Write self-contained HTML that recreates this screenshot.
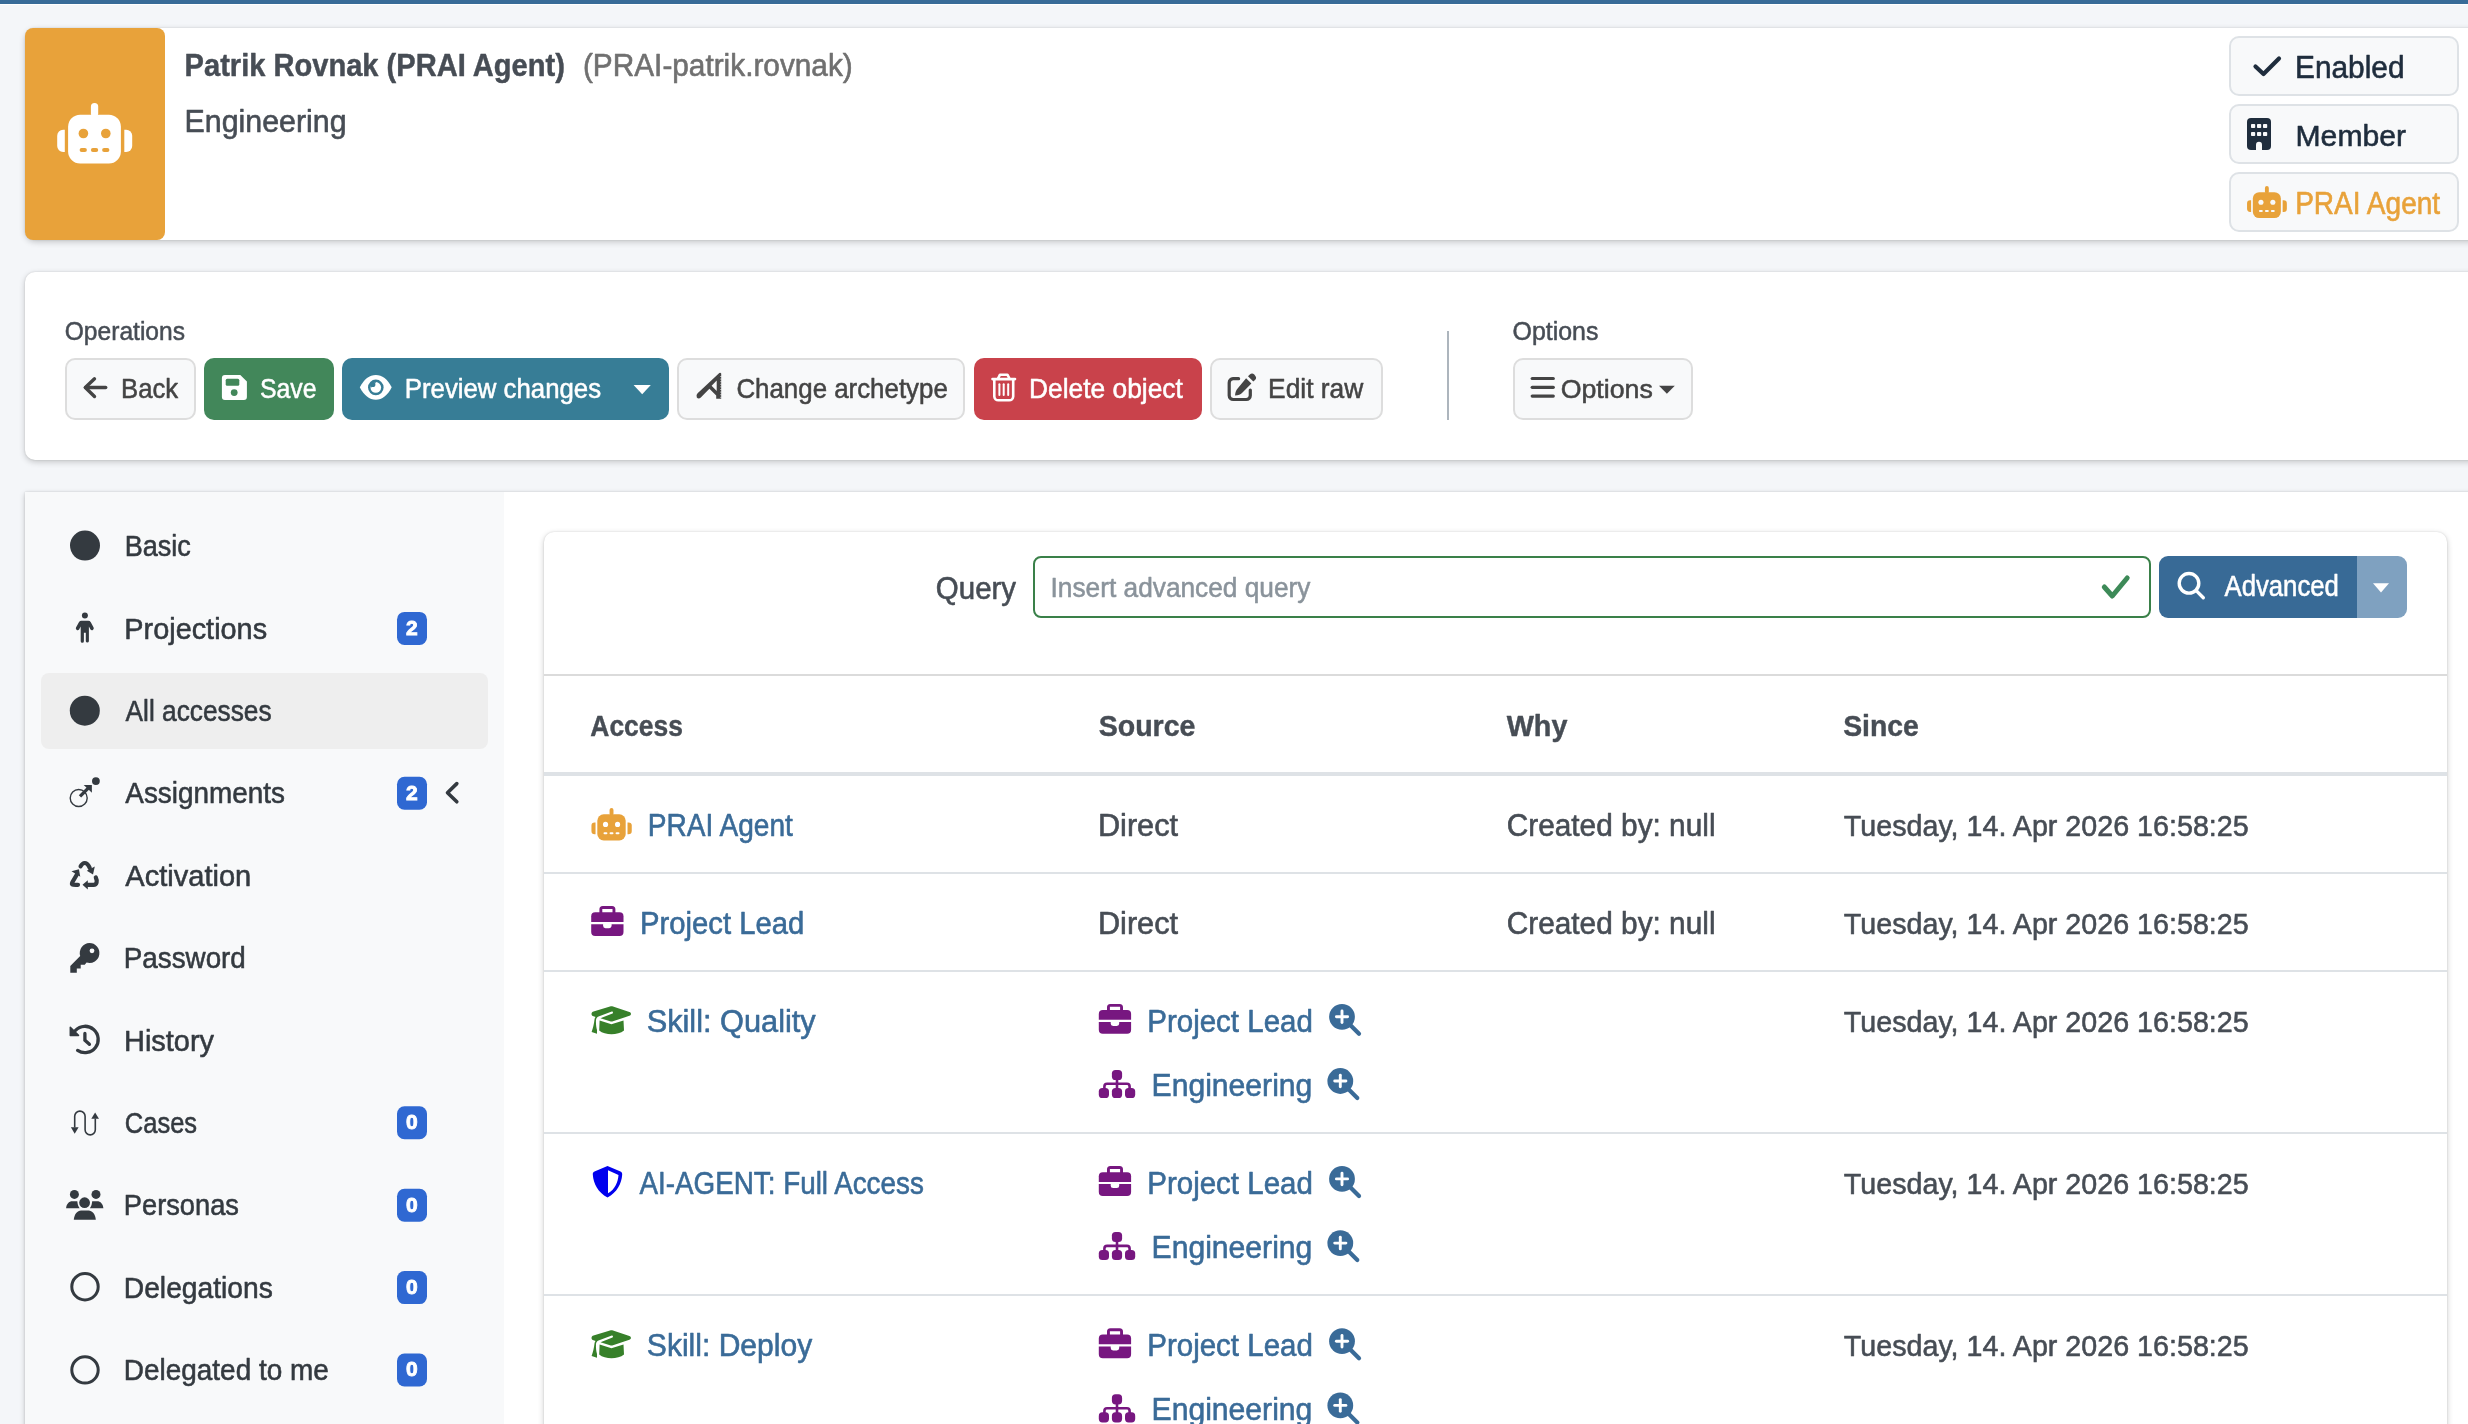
<!DOCTYPE html>
<html lang="en">
<head>
<meta charset="utf-8">
<title>Patrik Rovnak (PRAI Agent) - All accesses</title>
<style>
  html, body { margin:0; padding:0; }
  body { width:2468px; height:1424px; overflow:hidden; background:#f4f6f9; position:relative; font-family:"Liberation Sans", sans-serif; }
  .abs { position:absolute; box-sizing:border-box; }
  .card { background:#ffffff; border-radius:10px; box-shadow:0 0 2px rgba(0,0,0,.125), 0 2px 6px rgba(0,0,0,.2); }
  .btn { border-radius:10px; }
  .btn-def { background:#f8f9fa; border:2px solid #dddddd; }
  .tag { background:#f8f9fa; border:2px solid #dee2e6; border-radius:10px; }
  svg.overlay { position:absolute; left:0; top:0; will-change:transform; }
  svg text { font-family:"Liberation Sans", sans-serif; }
</style>
</head>
<body>
<div class="abs" style="left:0;top:0;width:2468px;height:4px;background:#386b98"></div>
<div class="abs" style="left:0;top:4px;width:2468px;height:1px;background:#ffffff"></div>

<!-- header card -->
<div class="abs card" style="left:25px;top:28px;width:2520px;height:212px;"></div>
<div class="abs" style="left:25px;top:28px;width:140px;height:212px;background:#e8a23a;border-radius:8px"></div>
<div class="abs tag" style="left:2229px;top:36px;width:230px;height:60px"></div>
<div class="abs tag" style="left:2229px;top:104px;width:230px;height:60px"></div>
<div class="abs tag" style="left:2229px;top:172px;width:230px;height:60px"></div>

<!-- operations card -->
<div class="abs card" style="left:25px;top:272px;width:2520px;height:188px;"></div>
<div class="abs btn btn-def" style="left:65px;top:358px;width:131px;height:62px"></div>
<div class="abs btn" style="left:204px;top:358px;width:130px;height:62px;background:#42875a"></div>
<div class="abs btn" style="left:342px;top:358px;width:327px;height:62px;background:#377d96"></div>
<div class="abs btn btn-def" style="left:677px;top:358px;width:288px;height:62px"></div>
<div class="abs btn" style="left:974px;top:358px;width:228px;height:62px;background:#c9424b"></div>
<div class="abs btn btn-def" style="left:1210px;top:358px;width:173px;height:62px"></div>
<div class="abs btn btn-def" style="left:1513px;top:358px;width:180px;height:62px"></div>

<!-- main card -->
<div class="abs card" style="left:25px;top:492px;width:2520px;height:1100px;border-radius:0"></div>
<div class="abs" style="left:25px;top:492px;width:479px;height:1000px;background:#f8f9fa"></div>
<div class="abs" style="left:41px;top:673px;width:447px;height:76px;background:#eeeeee;border-radius:8px"></div>

<!-- inner card -->
<div class="abs card" style="left:544px;top:532px;width:1903px;height:1000px;"></div>
<div class="abs" style="left:1033px;top:556px;width:1118px;height:62px;border:2px solid #3a8049;border-radius:8px;background:#fff"></div>
<div class="abs" style="left:2159px;top:556px;width:198px;height:62px;background:#386a96;border-radius:9px 0 0 9px"></div>
<div class="abs" style="left:2357px;top:556px;width:50px;height:62px;background:#7fa1c0;border-radius:0 9px 9px 0"></div>
<div class="abs" style="left:544px;top:674px;width:1903px;height:2px;background:#dbdbdb"></div>
<div class="abs" style="left:544px;top:772px;width:1903px;height:4px;background:#dee2e6"></div>
<div class="abs" style="left:544px;top:872px;width:1903px;height:2px;background:#dee2e6"></div>
<div class="abs" style="left:544px;top:970px;width:1903px;height:2px;background:#dee2e6"></div>
<div class="abs" style="left:544px;top:1132px;width:1903px;height:2px;background:#dee2e6"></div>
<div class="abs" style="left:544px;top:1294px;width:1903px;height:2px;background:#dee2e6"></div>

<svg class="overlay" width="2468" height="1424" viewBox="0 0 2468 1424">
<rect x="90.90" y="103.00" width="7.30" height="14.00" rx="3.65" fill="#ffffff"/><rect x="68.10" y="114.70" width="52.80" height="48.80" rx="12.00" fill="#ffffff"/><path d="M64.80,129.80 L63.10,129.80 A6.00,6.00 0 0 0 57.20,135.80 L57.20,146.00 A6.00,6.00 0 0 0 63.10,152.00 L64.80,152.00 Z" fill="#ffffff"/><path d="M124.30,129.80 L126.20,129.80 A6.00,6.00 0 0 1 132.20,135.80 L132.20,146.00 A6.00,6.00 0 0 1 126.20,152.00 L124.30,152.00 Z" fill="#ffffff"/><circle cx="83.40" cy="133.50" r="4.80" fill="#e8a23a"/><circle cx="105.80" cy="133.50" r="4.80" fill="#e8a23a"/><rect x="79.60" y="148.00" width="7.30" height="4.00" rx="2.00" fill="#e8a23a"/><rect x="90.90" y="148.00" width="7.30" height="4.00" rx="2.00" fill="#e8a23a"/><rect x="102.10" y="148.00" width="7.30" height="4.00" rx="2.00" fill="#e8a23a"/>
<rect x="2264.94" y="186.00" width="3.87" height="7.43" rx="1.94" fill="#e8a23a"/><rect x="2252.84" y="192.21" width="28.02" height="25.90" rx="6.37" fill="#e8a23a"/><path d="M2251.09,200.22 L2250.18,200.22 A3.18,3.18 0 0 0 2247.05,203.41 L2247.05,208.82 A3.18,3.18 0 0 0 2250.18,212.00 L2251.09,212.00 Z" fill="#e8a23a"/><path d="M2282.66,200.22 L2283.67,200.22 A3.18,3.18 0 0 1 2286.85,203.41 L2286.85,208.82 A3.18,3.18 0 0 1 2283.67,212.00 L2282.66,212.00 Z" fill="#e8a23a"/><circle cx="2260.96" cy="202.19" r="2.55" fill="#f8f9fa"/><circle cx="2272.84" cy="202.19" r="2.55" fill="#f8f9fa"/><rect x="2258.94" y="209.88" width="3.87" height="2.12" rx="1.06" fill="#f8f9fa"/><rect x="2264.94" y="209.88" width="3.87" height="2.12" rx="1.06" fill="#f8f9fa"/><rect x="2270.88" y="209.88" width="3.87" height="2.12" rx="1.06" fill="#f8f9fa"/>
<rect x="609.56" y="808.00" width="3.92" height="7.52" rx="1.96" fill="#e8a23a"/><rect x="597.31" y="814.29" width="28.37" height="26.22" rx="6.45" fill="#e8a23a"/><path d="M595.54,822.40 L594.62,822.40 A3.22,3.22 0 0 0 591.45,825.62 L591.45,831.11 A3.22,3.22 0 0 0 594.62,834.33 L595.54,834.33 Z" fill="#e8a23a"/><path d="M627.51,822.40 L628.53,822.40 A3.22,3.22 0 0 1 631.75,825.62 L631.75,831.11 A3.22,3.22 0 0 1 628.53,834.33 L627.51,834.33 Z" fill="#e8a23a"/><circle cx="605.53" cy="824.39" r="2.58" fill="#ffffff"/><circle cx="617.57" cy="824.39" r="2.58" fill="#ffffff"/><rect x="603.49" y="832.18" width="3.92" height="2.15" rx="1.07" fill="#ffffff"/><rect x="609.56" y="832.18" width="3.92" height="2.15" rx="1.07" fill="#ffffff"/><rect x="615.58" y="832.18" width="3.92" height="2.15" rx="1.07" fill="#ffffff"/>
<polyline points="2255.5,66.5 2263.5,74 2279,58.5" fill="none" stroke="#1f2d3d" stroke-width="4.2" stroke-linecap="round" stroke-linejoin="round"/>
<g><rect x="2247" y="118" width="24" height="32" rx="4" fill="#1f2d3d"/><rect x="2251" y="124" width="4.2" height="4" rx="0.8" fill="#f8f9fa"/><rect x="2251" y="132" width="4.2" height="4" rx="0.8" fill="#f8f9fa"/><rect x="2257" y="124" width="4.2" height="4" rx="0.8" fill="#f8f9fa"/><rect x="2257" y="132" width="4.2" height="4" rx="0.8" fill="#f8f9fa"/><rect x="2263" y="124" width="4.2" height="4" rx="0.8" fill="#f8f9fa"/><rect x="2263" y="132" width="4.2" height="4" rx="0.8" fill="#f8f9fa"/><path d="M2256,150 L2256,144.8 A3,3 0 0 1 2262,144.8 L2262,150 Z" fill="#f8f9fa"/></g>
<g fill="none" stroke="#444444" stroke-width="3.4" stroke-linecap="round" stroke-linejoin="round"><line x1="85.5" y1="387.5" x2="105.7" y2="387.5"/><polyline points="94.5,378.8 85.3,387.5 94.5,396.5"/></g>
<path d="M225,374.9 L240.3,374.9 L246.9,381.5 L246.9,396.9 A3,3 0 0 1 243.9,399.9 L224.9,399.9 A3,3 0 0 1 221.9,396.9 L221.9,377.9 A3,3 0 0 1 224.9,374.9 Z" fill="#ffffff"/><rect x="225.7" y="378.8" width="13.6" height="7" rx="1.5" fill="#42875a"/><circle cx="234.2" cy="392.6" r="3.4" fill="#42875a"/>
<path d="M359.8,387.3 C364,379 369.5,374.9 375.8,374.9 C382.1,374.9 387.6,379 391.7,387.3 C387.6,395.6 382.1,399.7 375.8,399.7 C369.5,399.7 364,395.6 359.8,387.3 Z" fill="#ffffff"/><circle cx="375.8" cy="387.4" r="7.8" fill="#377d96"/><circle cx="375.8" cy="387.4" r="5.3" fill="#ffffff"/><path d="M371.5,387.4 A4.3,4.3 0 0 1 375.8,383.1 L375.8,382.1 A5.3,5.3 0 0 0 370.5,387.4 Z" fill="#377d96"/><circle cx="372.8" cy="384.4" r="2.6" fill="#377d96"/>
<polygon points="633.6,385 650.8,385 642.2,394.2" fill="#ffffff"/>
<path d="M697.6,393.2 L719.3,372.9 Q720.6,372.2 721.2,373.6 L721.2,398.7 L716.2,398.7 L716.2,395.6 L709.4,388.8 L700.8,397.6 Q698.6,399.6 696.8,397.6 Q695.4,395.4 697.6,393.2 Z M711.6,385.7 L716.7,380.6 L716.7,391.1 Z" fill="#444444" fill-rule="evenodd"/>
<g stroke="#f8f9fa" stroke-width="0.9"><line x1="720.4" y1="376.5" x2="721.6" y2="376.5"/><line x1="720.4" y1="379.1" x2="721.6" y2="379.1"/><line x1="720.4" y1="381.7" x2="721.6" y2="381.7"/><line x1="720.4" y1="384.3" x2="721.6" y2="384.3"/><line x1="720.4" y1="386.9" x2="721.6" y2="386.9"/><line x1="720.4" y1="389.5" x2="721.6" y2="389.5"/><line x1="720.4" y1="392.1" x2="721.6" y2="392.1"/><line x1="720.4" y1="394.7" x2="721.6" y2="394.7"/><line x1="720.4" y1="397.3" x2="721.6" y2="397.3"/></g>
<g fill="none" stroke="#ffffff" stroke-width="2.6" stroke-linejoin="round"><line x1="992.5" y1="379.1" x2="1015" y2="379.1" stroke-linecap="round"/><path d="M997.8,379 L1000,374.7 L1007.4,374.7 L1009.7,379"/><path d="M994.3,380 L994.3,396.5 A4,4 0 0 0 998.3,400.3 L1009.2,400.3 A4,4 0 0 0 1013.2,396.5 L1013.2,380"/><line x1="999.4" y1="384.3" x2="999.4" y2="395" stroke-width="2" stroke-linecap="round"/><line x1="1003.7" y1="384.3" x2="1003.7" y2="395" stroke-width="2" stroke-linecap="round"/><line x1="1008.2" y1="384.3" x2="1008.2" y2="395" stroke-width="2" stroke-linecap="round"/></g>
<g><path d="M1238.6,378.7 L1233,378.7 A4,4 0 0 0 1229.2,382.7 L1229.2,395.5 A4,4 0 0 0 1233.2,399.5 L1246.3,399.5 A4,4 0 0 0 1250.3,395.5 L1250.3,390.1" fill="none" stroke="#444444" stroke-width="3.2" stroke-linecap="round"/><path d="M1246.1,378.2 L1251.4,383.5 L1242,393 C1240.5,394.4 1238.5,395.2 1235,395.6 C1235.4,392 1236.2,390 1237.6,388.6 Z" fill="#444444"/><path d="M1248,376.3 L1249.8,374.6 A3.2,3.2 0 0 1 1254.3,374.6 L1255,375.4 A3.2,3.2 0 0 1 1255,379.9 L1253.3,381.6 Z" fill="#444444"/></g>
<rect x="1447" y="331" width="2" height="89" fill="#adb5bd"/>
<g stroke="#444444" stroke-width="3.2" stroke-linecap="round"><line x1="1532.2" y1="378.5" x2="1553.3" y2="378.5"/><line x1="1532.2" y1="387.3" x2="1553.3" y2="387.3"/><line x1="1532.2" y1="396.1" x2="1553.3" y2="396.1"/></g>
<polygon points="1659,385.7 1674.8,385.7 1666.9,393.8" fill="#444444"/>
<circle cx="85" cy="545.6" r="15" fill="#343a40"/>
<circle cx="84.8" cy="710.7" r="15" fill="#343a40"/>
<g fill="#343a40"><circle cx="84.9" cy="615.4" r="3"/><path d="M81.5,620.8 L88.3,620.8 A3,3 0 0 1 90.8,622.2 L93.6,627.6 A1.8,1.8 0 0 1 90.5,629.4 L88.9,626.4 L88.9,641.2 A1.6,1.6 0 0 1 85.8,641.2 L85.8,632.8 L83.9,632.8 L83.9,641.2 A1.6,1.6 0 0 1 80.7,641.2 L80.7,626.4 L79.1,629.4 A1.8,1.8 0 0 1 76,627.6 L78.9,622.2 A3,3 0 0 1 81.5,620.8 Z"/></g>
<g><circle cx="78.7" cy="798" r="8.5" fill="none" stroke="#343a40" stroke-width="1.4"/><line x1="80" y1="796.3" x2="88.5" y2="787.8" stroke="#343a40" stroke-width="3.3"/><polygon points="83.7,784.9 91.9,784.9 91.9,792.8" fill="#343a40"/><circle cx="95.9" cy="781.1" r="3.9" fill="#343a40"/></g>
<g fill="none" stroke="#343a40" stroke-width="4.2" stroke-linecap="round"><path d="M80.6,866.3 C83,862 86.5,862 88.6,865.8 L89.8,868"/><path d="M76.9,874.5 L72.5,882 C71,885 72.5,884.8 76.5,884.8 L78,884.8"/><path d="M86.5,884.8 L93.5,884.8 C97,884.8 97.5,881 95.8,877.5"/></g><g fill="#343a40"><polygon points="86.8,870.8 94.8,866.4 93,874.4"/><polygon points="71.5,871.3 78.9,869.2 80.3,876.7"/><polygon points="82.5,884.8 87.8,880.2 87.8,889.4"/></g>
<g fill="#343a40"><path d="M89.4,943 A10,10 0 1 1 86.6,962.6 L84.7,964.8 L80.7,964.8 L80.7,968.5 L76.8,968.5 L76.8,972.7 L70.3,972.7 L70.3,965.9 L80.2,956 A10,10 0 0 1 89.4,943 Z"/></g><circle cx="92" cy="950.8" r="2.4" fill="#f8f9fa"/>
<g fill="none" stroke="#343a40" stroke-width="3.3" stroke-linecap="round"><path d="M75.5,1030.3 A13.2,13.2 0 1 1 77.6,1050.4"/><polyline points="84.9,1033.5 84.9,1040.2 89.4,1044.3"/></g><polygon points="70.3,1027.3 70.3,1035.4 78.5,1035.4" fill="#343a40" stroke="#343a40" stroke-width="1.5" stroke-linejoin="round"/>
<g fill="none" stroke="#343a40" stroke-width="1.6"><path d="M74.7,1127.5 L74.7,1116.3 A5.2,5.2 0 0 1 85.1,1116.3 L85.1,1129.8 A5.1,5.1 0 0 0 95.3,1129.8 L95.3,1118.6"/></g><g fill="#343a40"><polygon points="70.9,1127.2 78.6,1127.2 74.7,1133.8"/><polygon points="91.3,1118.8 99,1118.8 95.1,1112.5"/></g>
<g fill="#343a40"><circle cx="74.4" cy="1194.4" r="4.5"/><circle cx="96" cy="1194.4" r="4.5"/><circle cx="84.6" cy="1202.7" r="5.4"/><path d="M66.1,1208.3 C66.5,1204 68.8,1201.3 72.5,1201.3 L77.3,1201.3 C77.6,1203.8 78,1206.2 79.6,1208.3 Z"/><path d="M103.4,1208.3 C103,1204 100.7,1201.3 97,1201.3 L92.2,1201.3 C91.9,1203.8 91.5,1206.2 89.9,1208.3 Z"/><path d="M73.8,1219.7 C74.2,1214 77.5,1210.4 81,1210.4 L88.6,1210.4 C92.1,1210.4 95.4,1214 95.8,1219.7 Z"/></g>
<circle cx="85" cy="1286.7" r="13.2" fill="none" stroke="#343a40" stroke-width="3"/>
<circle cx="85" cy="1369.9" r="13.2" fill="none" stroke="#343a40" stroke-width="3"/>
<polyline points="456.8,783.6 447.5,792.7 456.8,801.8" fill="none" stroke="#343a40" stroke-width="3.6" stroke-linecap="round" stroke-linejoin="round"/>
<rect x="397" y="611.90" width="30" height="33" rx="7.5" fill="#2f68d2"/>
<text x="411.8" y="634.80" font-size="21" font-weight="700" fill="#ffffff" stroke="#ffffff" stroke-width="0.9" text-anchor="middle">2</text>
<rect x="397" y="776.70" width="30" height="33" rx="7.5" fill="#2f68d2"/>
<text x="411.8" y="799.60" font-size="21" font-weight="700" fill="#ffffff" stroke="#ffffff" stroke-width="0.9" text-anchor="middle">2</text>
<rect x="397" y="1106.30" width="30" height="33" rx="7.5" fill="#2f68d2"/>
<text x="411.8" y="1129.20" font-size="21" font-weight="700" fill="#ffffff" stroke="#ffffff" stroke-width="0.9" text-anchor="middle">0</text>
<rect x="397" y="1188.70" width="30" height="33" rx="7.5" fill="#2f68d2"/>
<text x="411.8" y="1211.60" font-size="21" font-weight="700" fill="#ffffff" stroke="#ffffff" stroke-width="0.9" text-anchor="middle">0</text>
<rect x="397" y="1271.10" width="30" height="33" rx="7.5" fill="#2f68d2"/>
<text x="411.8" y="1294.00" font-size="21" font-weight="700" fill="#ffffff" stroke="#ffffff" stroke-width="0.9" text-anchor="middle">0</text>
<rect x="397" y="1353.50" width="30" height="33" rx="7.5" fill="#2f68d2"/>
<text x="411.8" y="1376.40" font-size="21" font-weight="700" fill="#ffffff" stroke="#ffffff" stroke-width="0.9" text-anchor="middle">0</text>
<polyline points="2104.3,587 2112.3,596 2127.2,578" fill="none" stroke="#3d8a58" stroke-width="5" stroke-linecap="round" stroke-linejoin="round"/>
<g fill="none" stroke="#ffffff" stroke-width="3.4" stroke-linecap="round"><circle cx="2189" cy="583.3" r="9.8"/><line x1="2196.2" y1="590.6" x2="2203.3" y2="597.7"/></g>
<polygon points="2373,583.3 2389,583.3 2381,592.5" fill="#ffffff"/>
<g fill="#771780"><path d="M599.4000000000001,913 L599.4000000000001,909.6 A3.4,3.4 0 0 1 602.8000000000001,906.1 L612.0,906.1 A3.4,3.4 0 0 1 615.4000000000001,909.6 L615.4000000000001,913 L612.5,913 L612.5,909 L602.3000000000001,909 L602.3000000000001,913 Z"/><path d="M595.2,912.3 L619.5,912.3 A4,4 0 0 1 623.5,916.3 L623.5,922 L591.2,922 L591.2,916.3 A4,4 0 0 1 595.2,912.3 Z"/><path d="M591.2,924.2 L603.1,924.2 L603.1,925.8 A2.4,2.4 0 0 0 605.5,928.2 L609.2,928.2 A2.4,2.4 0 0 0 611.6,925.8 L611.6,924.2 L623.5,924.2 L623.5,932 A4,4 0 0 1 619.5,936 L595.2,936 A4,4 0 0 1 591.2,932 Z"/></g>
<g fill="#37802a"><path d="M591.50,1013.90 C591.50,1012.50 592.50,1012.00 593.50,1011.60 L610.00,1006.60 C611.00,1006.20 612.00,1006.20 613.00,1006.60 L629.40,1012.00 C631.50,1012.80 631.50,1015.00 629.40,1015.80 L613.00,1021.30 C612.00,1021.70 611.00,1021.70 610.00,1021.30 L600.50,1018.20 L612.50,1013.50 C613.50,1013.00 612.80,1011.20 611.80,1011.60 L598.50,1016.60 C597.00,1017.20 596.20,1018.60 596.00,1020.00 C595.80,1024.00 596.20,1027.00 597.00,1030.00 L597.00,1033.70 L591.60,1032.00 C593.00,1028.00 594.00,1024.00 594.50,1019.50 C594.80,1018.00 595.20,1017.40 595.70,1017.00 L593.50,1016.20 C592.30,1015.80 591.50,1015.00 591.50,1013.90 Z"/><path d="M599.60,1020.40 L611.40,1024.30 L623.50,1020.40 L624.00,1030.50 C621.00,1033.00 616.00,1034.20 611.50,1034.20 C607.00,1034.20 602.00,1033.00 599.20,1030.50 Z"/></g>
<g fill="#0000ee"><path d="M607.50,1166.00 L620.50,1171.60 C621.80,1172.20 622.30,1173.20 622.20,1174.60 C621.60,1184.00 617.00,1192.50 607.50,1197.60 C598.00,1192.50 593.40,1184.00 592.80,1174.60 C592.70,1173.20 593.20,1172.20 594.50,1171.60 Z M608.00,1170.20 L608.00,1193.30 C614.80,1189.50 618.00,1182.50 618.50,1175.00 Z" fill-rule="evenodd"/></g>
<g fill="#37802a"><path d="M591.50,1337.90 C591.50,1336.50 592.50,1336.00 593.50,1335.60 L610.00,1330.60 C611.00,1330.20 612.00,1330.20 613.00,1330.60 L629.40,1336.00 C631.50,1336.80 631.50,1339.00 629.40,1339.80 L613.00,1345.30 C612.00,1345.70 611.00,1345.70 610.00,1345.30 L600.50,1342.20 L612.50,1337.50 C613.50,1337.00 612.80,1335.20 611.80,1335.60 L598.50,1340.60 C597.00,1341.20 596.20,1342.60 596.00,1344.00 C595.80,1348.00 596.20,1351.00 597.00,1354.00 L597.00,1357.70 L591.60,1356.00 C593.00,1352.00 594.00,1348.00 594.50,1343.50 C594.80,1342.00 595.20,1341.40 595.70,1341.00 L593.50,1340.20 C592.30,1339.80 591.50,1339.00 591.50,1337.90 Z"/><path d="M599.60,1344.40 L611.40,1348.30 L623.50,1344.40 L624.00,1354.50 C621.00,1357.00 616.00,1358.20 611.50,1358.20 C607.00,1358.20 602.00,1357.00 599.20,1354.50 Z"/></g>
<g fill="#771780"><path d="M1107.0,1010.8 L1107.0,1007.4 A3.4,3.4 0 0 1 1110.3999999999999,1003.9 L1119.6,1003.9 A3.4,3.4 0 0 1 1123.0,1007.4 L1123.0,1010.8 L1120.1,1010.8 L1120.1,1006.8 L1109.8999999999999,1006.8 L1109.8999999999999,1010.8 Z"/><path d="M1102.8,1010.0999999999999 L1127.1,1010.0999999999999 A4,4 0 0 1 1131.1,1014.0999999999999 L1131.1,1019.8 L1098.8,1019.8 L1098.8,1014.0999999999999 A4,4 0 0 1 1102.8,1010.0999999999999 Z"/><path d="M1098.8,1022.0 L1110.7,1022.0 L1110.7,1023.5999999999999 A2.4,2.4 0 0 0 1113.1,1026.0 L1116.8,1026.0 A2.4,2.4 0 0 0 1119.2,1023.5999999999999 L1119.2,1022.0 L1131.1,1022.0 L1131.1,1029.8 A4,4 0 0 1 1127.1,1033.8 L1102.8,1033.8 A4,4 0 0 1 1098.8,1029.8 Z"/></g>
<g><circle cx="1342.00" cy="1016.80" r="12.9" fill="#3a6b98"/><line x1="1350.0" y1="1024.8" x2="1359.0" y2="1033.8" stroke="#3a6b98" stroke-width="4.2" stroke-linecap="round"/><g stroke="#ffffff" stroke-width="2.9" stroke-linecap="round"><line x1="1336.40" y1="1016.80" x2="1347.60" y2="1016.80"/><line x1="1342.00" y1="1011.00" x2="1342.00" y2="1022.60"/></g></g>
<g fill="#771780"><rect x="1111.8999999999999" y="1069.9" width="10.2" height="10.1" rx="3.6"/><rect x="1115.7" y="1078.9" width="2.6" height="10"/><path d="M1103.1,1089.4 L1103.1,1086.5 A4,4 0 0 1 1107.1,1082.5 L1126.8999999999999,1082.5 A4,4 0 0 1 1130.8999999999999,1086.5 L1130.8999999999999,1089.4 L1128.3,1089.4 L1128.3,1086.5 A1.4,1.4 0 0 0 1126.8999999999999,1085.1000000000001 L1107.1,1085.1000000000001 A1.4,1.4 0 0 0 1105.7,1086.5 L1105.7,1089.4 Z"/><rect x="1098.8" y="1087.9" width="10.2" height="10.1" rx="3.6"/><rect x="1111.8999999999999" y="1087.9" width="10.2" height="10.1" rx="3.6"/><rect x="1125.0" y="1087.9" width="10.2" height="10.1" rx="3.6"/></g>
<g><circle cx="1340.30" cy="1081.00" r="12.9" fill="#3a6b98"/><line x1="1348.3" y1="1089.0" x2="1357.3" y2="1098.0" stroke="#3a6b98" stroke-width="4.2" stroke-linecap="round"/><g stroke="#ffffff" stroke-width="2.9" stroke-linecap="round"><line x1="1334.70" y1="1081.00" x2="1345.90" y2="1081.00"/><line x1="1340.30" y1="1075.20" x2="1340.30" y2="1086.80"/></g></g>
<g fill="#771780"><path d="M1107.0,1172.8999999999999 L1107.0,1169.4999999999998 A3.4,3.4 0 0 1 1110.3999999999999,1165.9999999999998 L1119.6,1165.9999999999998 A3.4,3.4 0 0 1 1123.0,1169.4999999999998 L1123.0,1172.8999999999999 L1120.1,1172.8999999999999 L1120.1,1168.8999999999999 L1109.8999999999999,1168.8999999999999 L1109.8999999999999,1172.8999999999999 Z"/><path d="M1102.8,1172.1999999999998 L1127.1,1172.1999999999998 A4,4 0 0 1 1131.1,1176.1999999999998 L1131.1,1181.8999999999999 L1098.8,1181.8999999999999 L1098.8,1176.1999999999998 A4,4 0 0 1 1102.8,1172.1999999999998 Z"/><path d="M1098.8,1184.1 L1110.7,1184.1 L1110.7,1185.6999999999998 A2.4,2.4 0 0 0 1113.1,1188.1 L1116.8,1188.1 A2.4,2.4 0 0 0 1119.2,1185.6999999999998 L1119.2,1184.1 L1131.1,1184.1 L1131.1,1191.8999999999999 A4,4 0 0 1 1127.1,1195.8999999999999 L1102.8,1195.8999999999999 A4,4 0 0 1 1098.8,1191.8999999999999 Z"/></g>
<g><circle cx="1342.00" cy="1178.90" r="12.9" fill="#3a6b98"/><line x1="1350.0" y1="1186.8999999999999" x2="1359.0" y2="1195.8999999999999" stroke="#3a6b98" stroke-width="4.2" stroke-linecap="round"/><g stroke="#ffffff" stroke-width="2.9" stroke-linecap="round"><line x1="1336.40" y1="1178.90" x2="1347.60" y2="1178.90"/><line x1="1342.00" y1="1173.10" x2="1342.00" y2="1184.70"/></g></g>
<g fill="#771780"><rect x="1111.8999999999999" y="1232.0" width="10.2" height="10.1" rx="3.6"/><rect x="1115.7" y="1241.0" width="2.6" height="10"/><path d="M1103.1,1251.5 L1103.1,1248.6 A4,4 0 0 1 1107.1,1244.6 L1126.8999999999999,1244.6 A4,4 0 0 1 1130.8999999999999,1248.6 L1130.8999999999999,1251.5 L1128.3,1251.5 L1128.3,1248.6 A1.4,1.4 0 0 0 1126.8999999999999,1247.2 L1107.1,1247.2 A1.4,1.4 0 0 0 1105.7,1248.6 L1105.7,1251.5 Z"/><rect x="1098.8" y="1250.0" width="10.2" height="10.1" rx="3.6"/><rect x="1111.8999999999999" y="1250.0" width="10.2" height="10.1" rx="3.6"/><rect x="1125.0" y="1250.0" width="10.2" height="10.1" rx="3.6"/></g>
<g><circle cx="1340.30" cy="1243.10" r="12.9" fill="#3a6b98"/><line x1="1348.3" y1="1251.1" x2="1357.3" y2="1260.1" stroke="#3a6b98" stroke-width="4.2" stroke-linecap="round"/><g stroke="#ffffff" stroke-width="2.9" stroke-linecap="round"><line x1="1334.70" y1="1243.10" x2="1345.90" y2="1243.10"/><line x1="1340.30" y1="1237.30" x2="1340.30" y2="1248.90"/></g></g>
<g fill="#771780"><path d="M1107.0,1335.1999999999998 L1107.0,1331.7999999999997 A3.4,3.4 0 0 1 1110.3999999999999,1328.2999999999997 L1119.6,1328.2999999999997 A3.4,3.4 0 0 1 1123.0,1331.7999999999997 L1123.0,1335.1999999999998 L1120.1,1335.1999999999998 L1120.1,1331.1999999999998 L1109.8999999999999,1331.1999999999998 L1109.8999999999999,1335.1999999999998 Z"/><path d="M1102.8,1334.4999999999998 L1127.1,1334.4999999999998 A4,4 0 0 1 1131.1,1338.4999999999998 L1131.1,1344.1999999999998 L1098.8,1344.1999999999998 L1098.8,1338.4999999999998 A4,4 0 0 1 1102.8,1334.4999999999998 Z"/><path d="M1098.8,1346.3999999999999 L1110.7,1346.3999999999999 L1110.7,1347.9999999999998 A2.4,2.4 0 0 0 1113.1,1350.3999999999999 L1116.8,1350.3999999999999 A2.4,2.4 0 0 0 1119.2,1347.9999999999998 L1119.2,1346.3999999999999 L1131.1,1346.3999999999999 L1131.1,1354.1999999999998 A4,4 0 0 1 1127.1,1358.1999999999998 L1102.8,1358.1999999999998 A4,4 0 0 1 1098.8,1354.1999999999998 Z"/></g>
<g><circle cx="1342.00" cy="1341.20" r="12.9" fill="#3a6b98"/><line x1="1350.0" y1="1349.1999999999998" x2="1359.0" y2="1358.1999999999998" stroke="#3a6b98" stroke-width="4.2" stroke-linecap="round"/><g stroke="#ffffff" stroke-width="2.9" stroke-linecap="round"><line x1="1336.40" y1="1341.20" x2="1347.60" y2="1341.20"/><line x1="1342.00" y1="1335.40" x2="1342.00" y2="1347.00"/></g></g>
<g fill="#771780"><rect x="1111.8999999999999" y="1394.3" width="10.2" height="10.1" rx="3.6"/><rect x="1115.7" y="1403.3" width="2.6" height="10"/><path d="M1103.1,1413.8 L1103.1,1410.8999999999999 A4,4 0 0 1 1107.1,1406.8999999999999 L1126.8999999999999,1406.8999999999999 A4,4 0 0 1 1130.8999999999999,1410.8999999999999 L1130.8999999999999,1413.8 L1128.3,1413.8 L1128.3,1410.8999999999999 A1.4,1.4 0 0 0 1126.8999999999999,1409.5 L1107.1,1409.5 A1.4,1.4 0 0 0 1105.7,1410.8999999999999 L1105.7,1413.8 Z"/><rect x="1098.8" y="1412.3" width="10.2" height="10.1" rx="3.6"/><rect x="1111.8999999999999" y="1412.3" width="10.2" height="10.1" rx="3.6"/><rect x="1125.0" y="1412.3" width="10.2" height="10.1" rx="3.6"/></g>
<g><circle cx="1340.30" cy="1405.40" r="12.9" fill="#3a6b98"/><line x1="1348.3" y1="1413.3999999999999" x2="1357.3" y2="1422.3999999999999" stroke="#3a6b98" stroke-width="4.2" stroke-linecap="round"/><g stroke="#ffffff" stroke-width="2.9" stroke-linecap="round"><line x1="1334.70" y1="1405.40" x2="1345.90" y2="1405.40"/><line x1="1340.30" y1="1399.60" x2="1340.30" y2="1411.20"/></g></g>
<text x="184.60" y="76.00" font-size="30.67" font-weight="700" fill="#474d55" stroke="#474d55" stroke-width="0.45" stroke-linejoin="round" textLength="380.23" lengthAdjust="spacingAndGlyphs">Patrik Rovnak (PRAI Agent)</text>
<text x="582.96" y="76.10" font-size="30.67" font-weight="400" fill="#707070" stroke="#707070" stroke-width="0.6" stroke-linejoin="round" textLength="269.78" lengthAdjust="spacingAndGlyphs">(PRAI-patrik.rovnak)</text>
<text x="184.52" y="132.00" font-size="30.67" font-weight="400" fill="#474d55" stroke="#474d55" stroke-width="0.6" stroke-linejoin="round" textLength="162.09" lengthAdjust="spacingAndGlyphs">Engineering</text>
<text x="2295.06" y="77.80" font-size="30.67" font-weight="400" fill="#1f2d3d" stroke="#1f2d3d" stroke-width="0.6" stroke-linejoin="round" textLength="109.42" lengthAdjust="spacingAndGlyphs">Enabled</text>
<text x="2295.51" y="145.80" font-size="30.38" font-weight="400" fill="#1f2d3d" stroke="#1f2d3d" stroke-width="0.59" stroke-linejoin="round" textLength="110.59" lengthAdjust="spacingAndGlyphs">Member</text>
<text x="2295.17" y="213.80" font-size="30.67" font-weight="400" fill="#e8a23a" stroke="#e8a23a" stroke-width="0.6" stroke-linejoin="round" textLength="144.97" lengthAdjust="spacingAndGlyphs">PRAI Agent</text>
<text x="64.74" y="340.00" font-size="25.51" font-weight="400" fill="#474d55" stroke="#474d55" stroke-width="0.5" stroke-linejoin="round" textLength="120.29" lengthAdjust="spacingAndGlyphs">Operations</text>
<text x="121.10" y="397.90" font-size="27.08" font-weight="400" fill="#444444" stroke="#444444" stroke-width="0.53" stroke-linejoin="round" textLength="57.09" lengthAdjust="spacingAndGlyphs">Back</text>
<text x="259.89" y="398.00" font-size="27.23" font-weight="400" fill="#ffffff" stroke="#ffffff" stroke-width="0.53" stroke-linejoin="round" textLength="56.57" lengthAdjust="spacingAndGlyphs">Save</text>
<text x="404.81" y="398.00" font-size="27.23" font-weight="400" fill="#ffffff" stroke="#ffffff" stroke-width="0.53" stroke-linejoin="round" textLength="196.26" lengthAdjust="spacingAndGlyphs">Preview changes</text>
<text x="736.45" y="398.00" font-size="27.23" font-weight="400" fill="#444444" stroke="#444444" stroke-width="0.53" stroke-linejoin="round" textLength="211.33" lengthAdjust="spacingAndGlyphs">Change archetype</text>
<text x="1029.06" y="398.00" font-size="27.23" font-weight="400" fill="#ffffff" stroke="#ffffff" stroke-width="0.53" stroke-linejoin="round" textLength="153.82" lengthAdjust="spacingAndGlyphs">Delete object</text>
<text x="1268.06" y="398.00" font-size="27.23" font-weight="400" fill="#444444" stroke="#444444" stroke-width="0.53" stroke-linejoin="round" textLength="95.29" lengthAdjust="spacingAndGlyphs">Edit raw</text>
<text x="1512.52" y="340.00" font-size="25.51" font-weight="400" fill="#474d55" stroke="#474d55" stroke-width="0.5" stroke-linejoin="round" textLength="85.85" lengthAdjust="spacingAndGlyphs">Options</text>
<text x="1560.67" y="397.70" font-size="26.08" font-weight="400" fill="#444444" stroke="#444444" stroke-width="0.51" stroke-linejoin="round" textLength="92.22" lengthAdjust="spacingAndGlyphs">Options</text>
<text x="124.67" y="556.20" font-size="29.52" font-weight="400" fill="#343a40" stroke="#343a40" stroke-width="0.58" stroke-linejoin="round" textLength="66.10" lengthAdjust="spacingAndGlyphs">Basic</text>
<text x="124.34" y="638.60" font-size="29.52" font-weight="400" fill="#343a40" stroke="#343a40" stroke-width="0.58" stroke-linejoin="round" textLength="142.75" lengthAdjust="spacingAndGlyphs">Projections</text>
<text x="125.50" y="721.00" font-size="29.52" font-weight="400" fill="#343a40" stroke="#343a40" stroke-width="0.58" stroke-linejoin="round" textLength="146.13" lengthAdjust="spacingAndGlyphs">All accesses</text>
<text x="125.30" y="803.40" font-size="29.52" font-weight="400" fill="#343a40" stroke="#343a40" stroke-width="0.58" stroke-linejoin="round" textLength="159.62" lengthAdjust="spacingAndGlyphs">Assignments</text>
<text x="125.30" y="885.80" font-size="29.52" font-weight="400" fill="#343a40" stroke="#343a40" stroke-width="0.58" stroke-linejoin="round" textLength="125.94" lengthAdjust="spacingAndGlyphs">Activation</text>
<text x="123.82" y="968.20" font-size="29.52" font-weight="400" fill="#343a40" stroke="#343a40" stroke-width="0.58" stroke-linejoin="round" textLength="121.98" lengthAdjust="spacingAndGlyphs">Password</text>
<text x="124.04" y="1050.60" font-size="29.52" font-weight="400" fill="#343a40" stroke="#343a40" stroke-width="0.58" stroke-linejoin="round" textLength="90.01" lengthAdjust="spacingAndGlyphs">History</text>
<text x="124.84" y="1133.00" font-size="29.52" font-weight="400" fill="#343a40" stroke="#343a40" stroke-width="0.58" stroke-linejoin="round" textLength="72.24" lengthAdjust="spacingAndGlyphs">Cases</text>
<text x="123.85" y="1215.40" font-size="29.52" font-weight="400" fill="#343a40" stroke="#343a40" stroke-width="0.58" stroke-linejoin="round" textLength="115.09" lengthAdjust="spacingAndGlyphs">Personas</text>
<text x="123.79" y="1297.80" font-size="29.52" font-weight="400" fill="#343a40" stroke="#343a40" stroke-width="0.58" stroke-linejoin="round" textLength="149.06" lengthAdjust="spacingAndGlyphs">Delegations</text>
<text x="123.81" y="1380.20" font-size="29.52" font-weight="400" fill="#343a40" stroke="#343a40" stroke-width="0.58" stroke-linejoin="round" textLength="205.06" lengthAdjust="spacingAndGlyphs">Delegated to me</text>
<text x="935.84" y="599.00" font-size="30.67" font-weight="400" fill="#474d55" stroke="#474d55" stroke-width="0.6" stroke-linejoin="round" textLength="80.27" lengthAdjust="spacingAndGlyphs">Query</text>
<text x="1050.59" y="596.90" font-size="27.51" font-weight="400" fill="#8a939b" stroke="#8a939b" stroke-width="0.54" stroke-linejoin="round" textLength="259.83" lengthAdjust="spacingAndGlyphs">Insert advanced query</text>
<text x="2224.50" y="596.20" font-size="28.95" font-weight="400" fill="#ffffff" stroke="#ffffff" stroke-width="0.56" stroke-linejoin="round" textLength="114.33" lengthAdjust="spacingAndGlyphs">Advanced</text>
<text x="590.33" y="736.00" font-size="30.24" font-weight="700" fill="#474d55" stroke="#474d55" stroke-width="0.44" stroke-linejoin="round" textLength="92.58" lengthAdjust="spacingAndGlyphs">Access</text>
<text x="1098.66" y="736.00" font-size="30.24" font-weight="700" fill="#474d55" stroke="#474d55" stroke-width="0.44" stroke-linejoin="round" textLength="96.82" lengthAdjust="spacingAndGlyphs">Source</text>
<text x="1506.70" y="736.00" font-size="30.24" font-weight="700" fill="#474d55" stroke="#474d55" stroke-width="0.44" stroke-linejoin="round" textLength="60.74" lengthAdjust="spacingAndGlyphs">Why</text>
<text x="1843.16" y="736.00" font-size="30.24" font-weight="700" fill="#474d55" stroke="#474d55" stroke-width="0.44" stroke-linejoin="round" textLength="75.67" lengthAdjust="spacingAndGlyphs">Since</text>
<text x="647.78" y="836.10" font-size="30.81" font-weight="400" fill="#3a6b98" stroke="#3a6b98" stroke-width="0.6" stroke-linejoin="round" textLength="145.12" lengthAdjust="spacingAndGlyphs">PRAI Agent</text>
<text x="1097.91" y="836.10" font-size="30.81" font-weight="400" fill="#474d55" stroke="#474d55" stroke-width="0.6" stroke-linejoin="round" textLength="80.11" lengthAdjust="spacingAndGlyphs">Direct</text>
<text x="1506.73" y="835.70" font-size="30.81" font-weight="400" fill="#474d55" stroke="#474d55" stroke-width="0.6" stroke-linejoin="round" textLength="208.82" lengthAdjust="spacingAndGlyphs">Created by: null</text>
<text x="1843.86" y="836.00" font-size="30.38" font-weight="400" fill="#474d55" stroke="#474d55" stroke-width="0.59" stroke-linejoin="round" textLength="404.84" lengthAdjust="spacingAndGlyphs">Tuesday, 14. Apr 2026 16:58:25</text>
<text x="640.10" y="934.10" font-size="30.81" font-weight="400" fill="#3a6b98" stroke="#3a6b98" stroke-width="0.6" stroke-linejoin="round" textLength="164.22" lengthAdjust="spacingAndGlyphs">Project Lead</text>
<text x="1097.91" y="934.10" font-size="30.81" font-weight="400" fill="#474d55" stroke="#474d55" stroke-width="0.6" stroke-linejoin="round" textLength="80.11" lengthAdjust="spacingAndGlyphs">Direct</text>
<text x="1506.73" y="934.10" font-size="30.81" font-weight="400" fill="#474d55" stroke="#474d55" stroke-width="0.6" stroke-linejoin="round" textLength="208.82" lengthAdjust="spacingAndGlyphs">Created by: null</text>
<text x="1843.86" y="934.10" font-size="30.38" font-weight="400" fill="#474d55" stroke="#474d55" stroke-width="0.59" stroke-linejoin="round" textLength="404.84" lengthAdjust="spacingAndGlyphs">Tuesday, 14. Apr 2026 16:58:25</text>
<text x="646.70" y="1031.90" font-size="30.81" font-weight="400" fill="#3a6b98" stroke="#3a6b98" stroke-width="0.6" stroke-linejoin="round" textLength="169.03" lengthAdjust="spacingAndGlyphs">Skill: Quality</text>
<text x="1843.86" y="1031.90" font-size="30.38" font-weight="400" fill="#474d55" stroke="#474d55" stroke-width="0.59" stroke-linejoin="round" textLength="404.84" lengthAdjust="spacingAndGlyphs">Tuesday, 14. Apr 2026 16:58:25</text>
<text x="639.50" y="1194.00" font-size="30.81" font-weight="400" fill="#3a6b98" stroke="#3a6b98" stroke-width="0.6" stroke-linejoin="round" textLength="284.30" lengthAdjust="spacingAndGlyphs">AI-AGENT: Full Access</text>
<text x="1843.86" y="1194.00" font-size="30.38" font-weight="400" fill="#474d55" stroke="#474d55" stroke-width="0.59" stroke-linejoin="round" textLength="404.84" lengthAdjust="spacingAndGlyphs">Tuesday, 14. Apr 2026 16:58:25</text>
<text x="646.85" y="1356.30" font-size="30.81" font-weight="400" fill="#3a6b98" stroke="#3a6b98" stroke-width="0.6" stroke-linejoin="round" textLength="165.39" lengthAdjust="spacingAndGlyphs">Skill: Deploy</text>
<text x="1843.86" y="1356.30" font-size="30.38" font-weight="400" fill="#474d55" stroke="#474d55" stroke-width="0.59" stroke-linejoin="round" textLength="404.84" lengthAdjust="spacingAndGlyphs">Tuesday, 14. Apr 2026 16:58:25</text>
<text x="1147.29" y="1031.90" font-size="30.81" font-weight="400" fill="#3a6b98" stroke="#3a6b98" stroke-width="0.6" stroke-linejoin="round" textLength="165.55" lengthAdjust="spacingAndGlyphs">Project Lead</text>
<text x="1151.54" y="1095.90" font-size="30.81" font-weight="400" fill="#3a6b98" stroke="#3a6b98" stroke-width="0.6" stroke-linejoin="round" textLength="160.82" lengthAdjust="spacingAndGlyphs">Engineering</text>
<text x="1147.29" y="1194.00" font-size="30.81" font-weight="400" fill="#3a6b98" stroke="#3a6b98" stroke-width="0.6" stroke-linejoin="round" textLength="165.55" lengthAdjust="spacingAndGlyphs">Project Lead</text>
<text x="1151.54" y="1258.00" font-size="30.81" font-weight="400" fill="#3a6b98" stroke="#3a6b98" stroke-width="0.6" stroke-linejoin="round" textLength="160.82" lengthAdjust="spacingAndGlyphs">Engineering</text>
<text x="1147.29" y="1356.30" font-size="30.81" font-weight="400" fill="#3a6b98" stroke="#3a6b98" stroke-width="0.6" stroke-linejoin="round" textLength="165.55" lengthAdjust="spacingAndGlyphs">Project Lead</text>
<text x="1151.54" y="1420.30" font-size="30.81" font-weight="400" fill="#3a6b98" stroke="#3a6b98" stroke-width="0.6" stroke-linejoin="round" textLength="160.82" lengthAdjust="spacingAndGlyphs">Engineering</text>
</svg>
</body>
</html>
